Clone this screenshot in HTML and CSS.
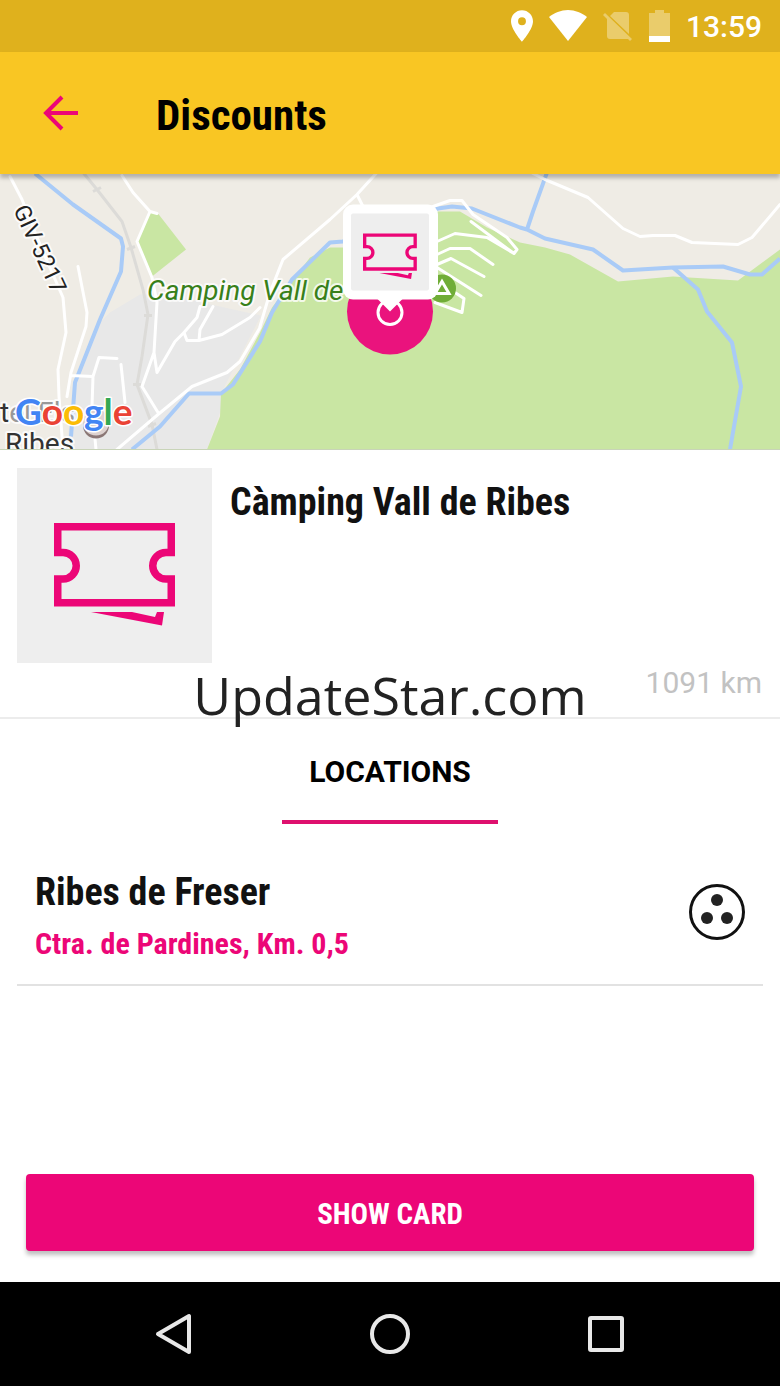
FILE: index.html
```html
<!DOCTYPE html>
<html lang="en">
<head>
    <meta charset="UTF-8">
    <meta name="viewport" content="width=device-width, initial-scale=1.0">
    <title>Discounts</title>
    <link rel="stylesheet" href="styles.css">
</head>
<body>

    <div class="status-bar">
        <svg width="22" height="32" viewBox="5 2 14 20"><path fill="#fff" d="M12 2C8.13 2 5 5.13 5 9c0 5.25 7 13 7 13s7-7.75 7-13c0-3.87-3.13-7-7-7zm0 9.5a2.5 2.5 0 1 1 0-5 2.5 2.5 0 0 1 0 5z"/></svg>
        <svg width="38" height="32" viewBox="0 0 38 32"><path fill="#fff" d="M19 31 0 7C5 3 12 0 19 0s14 3 19 7z"/></svg>
        <svg width="30" height="32" viewBox="0 0 30 32"><path fill="#fff" opacity=".35" d="M11 2h12q3 0 3 3v19L7 6zM0 5l2-2 27 26-2 2-2-2H7q-3 0-3-3V9z"/></svg>
        <svg width="21" height="32" viewBox="0 0 21 32"><path fill="#fff" opacity=".35" d="M6 0h9v3h6v23H0V3h6z"/><path fill="#fff" d="M0 26h21v6H0z"/></svg>
        <span class="time">13:59</span>
    </div>

    <header class="app-bar">
        <button class="back" aria-label="Back">
            <svg width="36" height="36" viewBox="0 0 36 36"><path fill="none" stroke="#ec0677" stroke-width="4" d="M35 18H4M19 2 3 18l16 16"/></svg>
        </button>
        <h1>Discounts</h1>
    </header>

    <div class="map">
        <svg viewBox="0 0 780 276" preserveAspectRatio="xMidYMid slice">
            <defs>
                <g id="ticket">
                    <path fill="none" stroke="#ec0677" stroke-width="7.5" d="M3.75 3.75h113.5V29.5H112a13.25 13.25 0 0 0 0 26.5h5.25v23.75H3.75V56H9a13.25 13.25 0 0 0 0-26.5H3.75z"/>
                    <path fill="#ec0677" d="M37 89h41l23 5 2-5h7l-2 13.500z"/>
                </g>
            </defs>
            <rect width="780" height="276" fill="#efece5"/>
            <!-- town and parks -->
            <path fill="#e8e8e8" d="M140 121l-30 18-10 10-25 60-9 67h141l14-40V220l40-78-100-22z"/>
            <path fill="#c9e6a3" d="M158 40l-8-2-13 30 15 35 34-27zM207 276l13-33 1-23 19-24 20-37 12-25 38-50 20-10h60l47-36h23l27 16 33 15 25 5 25 7 48 27 55-5 65 4 42-31v200z"/>
            <!-- railway -->
            <path class="rail" d="M83-1l14 17 25 32 9 26 12 42 5 25-6 42-5 28 15 40 5 25"/>
            <path class="rail" d="M93 18l8-4M127 76l8-3M144 142h8M133 211h8M148 253l8-3"/>
            <!-- rivers -->
            <path class="river" d="M35 0l38 31 48 34 2 8-2 25-21 48-25 63-4 54"/>
            <path class="river" d="M132 276l28-23 29-33h32l12-9 27-43 12-29 20-33 38-37 13-1 95-33 14-2 20 2 48 19 7 2 18 9 48 11 30 21 50-3 50-1 27 8h12l18-16"/>
            <path class="river" d="M547-1l-14 39-6 18M673 94l25 22 9 22 25 31 9 44-11 63"/>
            <!-- roads -->
            <path class="road" d="M10 3l12 23 20 50 21 48 3 35-8 37 1 27 4 53M78 93l9 46-1 14-15 46-4 24M71 202l22 1M117 185l-18-1-6 19-1 30 4 43M121 191l4 38"/>
            <path class="road" d="M122 2l11 17 17 19 7 2M150 38l-13 30 15 36 5 25-3 50-12 34 16 26M154 179l3 20 18-31 9-9 13-15 3-11M184 159l3 8h12l23-6 28-17 10-10M199 167l1-11 13-23M260 154l-20 34-13 11-35 14-34 28-41 35"/>
            <path class="road" d="M377-1l-20 22-27 25-47 40-13 33-10 34M357 21l6 12M433 33l17-6h12l11 14 34 23 10 12-3 4-43-32M437 68l18-8 32 4 27 16M437 81l13-6h20l23 16M437 91l14-6 33 18M437 94l44 28M455 119l9 6-2 14-27-10"/>
            <path class="road" d="M533 0l12 6 43 18 35 31 17 8 13-1h22l17 7 46 2 14-7 28-33"/>
            <!-- labels -->
            <text class="label road-name" transform="translate(13 36) rotate(65)">GIV-5217</text>
            <text class="label camp" x="147" y="126">Camping Vall de</text>
            <circle cx="96" cy="252" r="13" fill="#8b7775"/>
            <circle cx="96" cy="249" r="13" fill="#ddd2d0"/>
            <text class="label place" x="0" y="248"><tspan>t</tspan><tspan fill="#999">el Els</tspan></text>
            <text class="label place" x="5" y="279">Ribes</text>
            <text class="google" x="15" y="251"><tspan fill="#4285f4">G</tspan><tspan fill="#ea4335">o</tspan><tspan fill="#fbbc05">o</tspan><tspan fill="#4285f4">g</tspan><tspan fill="#34a853">l</tspan><tspan fill="#ea4335">e</tspan></text>
            <circle cx="442" cy="115" r="14" fill="#70ad37"/>
            <path fill="none" stroke="#fff" stroke-width="3" d="M435 120l7-12 7 12z"/>
            <!-- marker -->
            <circle cx="390" cy="138" r="43" fill="#ea137d"/>
            <circle cx="390" cy="139" r="12" fill="none" stroke="#fff" stroke-width="3"/>
            <path fill="#fff" d="M376 124h28l-14 14z"/>
            <rect x="343" y="31" width="95" height="95" rx="10" fill="#fff"/>
            <rect x="351" y="40" width="78" height="77" rx="2" fill="#eee"/>
            <use href="#ticket" transform="translate(363 60) scale(.445)"/>
        </svg>
    </div>

    <section class="place-card">
        <div class="thumb">
            <svg width="122" height="104" viewBox="0 0 122 104"><use href="#ticket"/></svg>
        </div>
        <h2>Càmping Vall de Ribes</h2>
        <span class="distance">1091 km</span>
        <span class="watermark">UpdateStar.com</span>
    </section>

    <nav class="tabs">
        <button class="tab">LOCATIONS</button>
    </nav>

    <main class="locations">
        <div class="location">
            <div>
                <h3>Ribes de Freser</h3>
                <p>Ctra. de Pardines, Km. 0,5</p>
            </div>
            <button class="more" aria-label="More options">
                <svg width="56" height="56" viewBox="0 0 56 56"><circle cx="28" cy="28" r="26.500" fill="none" stroke="#111" stroke-width="3"/><g fill="#222"><circle cx="28" cy="16" r="6"/><circle cx="18" cy="34" r="6"/><circle cx="38" cy="34" r="6"/></g></svg>
            </button>
        </div>
    </main>

    <button class="show-card">SHOW CARD</button>

    <nav class="nav-bar">
        <button aria-label="Back"><svg width="44" height="44" viewBox="0 0 44 44"><path d="M37 4v36L6 22z"/></svg></button>
        <button aria-label="Home"><svg width="44" height="44" viewBox="0 0 44 44"><circle cx="22" cy="22" r="18"/></svg></button>
        <button aria-label="Recent apps"><svg width="44" height="44" viewBox="0 0 44 44"><rect x="6" y="6" width="32" height="32" rx="1"/></svg></button>
    </nav>

</body>
</html>
```
FILE: styles.css
```css
* { margin: 0; padding: 0; box-sizing: border-box; }
body { background: #fff; color: #111; font-family: Roboto, sans-serif; min-height: 100vh; display: flex; flex-direction: column; }
button { border: none; background: none; cursor: pointer; }
svg { display: block; }
h1, h2, h3, .location p, .show-card { font-family: "Liberation Sans Narrow", "Roboto Condensed", sans-serif; font-weight: bold; }

.status-bar { background: #dfb11d; height: 52px; padding: 0 18px; display: flex; justify-content: flex-end; align-items: center; gap: 16px; }
.time { color: #fff; font-size: 30px; font-weight: 500; line-height: 32px; padding-top: 2px; }

.app-bar { background: #f9c623; height: 122px; padding: 0 43px; display: flex; align-items: center; gap: 77px; position: relative; z-index: 1; box-shadow: 0 4px 4px rgba(0, 0, 0, 0.25); }
h1 { color: #000; font-size: 43px; line-height: 48px; padding-top: 4px; }

.map { height: 276px; overflow: hidden; border-bottom: 1px solid #c8d4b8; }
.map svg { width: 100%; height: 100%; }
.rail { fill: none; stroke: #dcdbd8; stroke-width: 3; }
.river { fill: none; stroke: #a9cbf7; stroke-width: 4; stroke-linejoin: round; }
.road { fill: none; stroke: #fff; stroke-width: 3; stroke-linejoin: round; stroke-linecap: round; }
.label { stroke: #fff; stroke-width: 4px; stroke-opacity: 0.8; stroke-linejoin: round; paint-order: stroke; }
.road-name { fill: #222; font-size: 23px; }
.camp { fill: #38801a; font-size: 28px; font-style: italic; }
.place { fill: #333; font-size: 28px; }
.google { font-family: Lato, sans-serif; font-size: 37px; font-weight: bold; stroke: #fff; stroke-width: 3px; stroke-linejoin: round; paint-order: stroke; }

.place-card { position: relative; display: flex; gap: 18px; padding: 18px 18px 54px 17px; border-bottom: 2px solid #ececec; }
.thumb { background: #eee; width: 195px; height: 195px; flex: none; display: flex; align-items: center; justify-content: center; padding-top: 18px; }
h2 { font-size: 38px; line-height: 44px; margin-top: 12px; flex: 1; }
.distance { position: absolute; right: 18px; bottom: 16px; color: #c2c2c2; font-size: 30px; line-height: 36px; }
.watermark { position: absolute; left: 0; right: 0; bottom: -14px; text-align: center; color: #222; font-family: "Open Sans", sans-serif; font-size: 52px; line-height: 72px; }

.tabs { display: flex; justify-content: center; }
.tab { width: 216px; height: 105px; padding-top: 4px; border-bottom: 4px solid #de106e; color: #000; font-family: Roboto, sans-serif; font-size: 30px; font-weight: bold; }

.locations { flex: 1; padding: 28px 17px; }
.location { display: flex; justify-content: space-between; align-items: flex-start; padding: 18px 18px 22px; border-bottom: 2px solid #e2e2e2; }
h3 { font-size: 38px; line-height: 44px; }
.location p { color: #ec0677; font-size: 30px; line-height: 36px; margin-top: 12px; }
.more { margin-top: 14px; }

.show-card { background: #ec0677; color: #fff; font-size: 29px; height: 77px; padding-top: 2px; margin: 0 26px 31px; border-radius: 4px; box-shadow: 0 4px 4px rgba(0, 0, 0, 0.25); }

.nav-bar { background: #000; height: 104px; display: flex; justify-content: center; align-items: center; gap: 172px; }
.nav-bar svg { fill: none; stroke: #e8e8e8; stroke-width: 4; stroke-linejoin: round; }
```
